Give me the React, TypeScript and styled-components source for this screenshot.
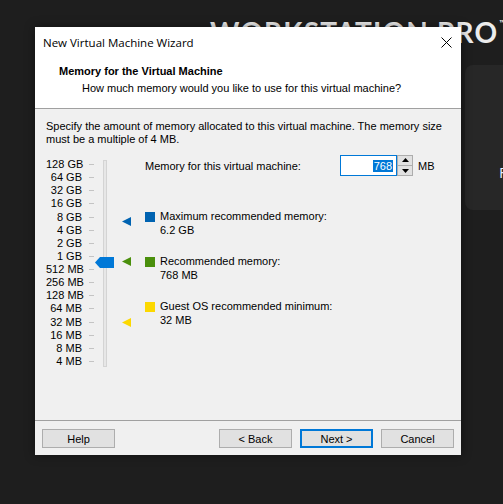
import styled, { createGlobalStyle } from "styled-components";

const GlobalStyle = createGlobalStyle`
  html, body {
    margin: 0;
    padding: 0;
    background: #1e1e1e;
  }
  body {
    font-family: "Liberation Sans", Arial, sans-serif;
    font-size: 11px;
    color: #000;
  }
`;

const ROW_H = 13.125;
const SCALE_TOP = 160;

const scaleLabels = [
    "128 GB", "64 GB", "32 GB", "16 GB", "8 GB", "4 GB", "2 GB", "1 GB",
    "512 MB", "256 MB", "128 MB", "64 MB", "32 MB", "16 MB", "8 MB", "4 MB",
];

// y inside the track for a memory size in MB (log scale, 128 GB at the top)
const trackY = (mb: number) => 158 + ROW_H / 2 + (17 - Math.log2(mb)) * ROW_H - SCALE_TOP;

const markers = [
    { mb: 6348.8, color: "#0063b1" },
    { mb: 768, color: "#4a8f0c" },
    { mb: 32, color: "#fcd800" },
];

const legend = [
    { title: "Maximum recommended memory:", value: "6.2 GB", color: "#0063b1" },
    { title: "Recommended memory:", value: "768 MB", color: "#4a8f0c" },
    { title: "Guest OS recommended minimum:", value: "32 MB", color: "#fcd800" },
];

const Page = styled.div`
    position: relative;
    width: 503px;
    height: 504px;
    overflow: hidden;
    background: #1e1e1e;
`;

const Backdrop = styled.div`
    display: flex;
    flex-direction: column;
    padding: 18px 0 0 210px;
`;

const BrandTitle = styled.div`
    font-family: Lato, "Open Sans", sans-serif;
    font-weight: 700;
    font-size: 28px;
    line-height: 28px;
    letter-spacing: 1.2px;
    color: #ececec;
    white-space: nowrap;

    sup {
        font-size: 8px;
        vertical-align: top;
        line-height: 10px;
        margin-left: 1px;
    }
`;

const HomeCard = styled.div`
    margin: 19px 0 0 255px;
    width: 80px;
    height: 145px;
    padding: 99px 0 0 34px;
    box-sizing: border-box;
    background: #272727;
    border-radius: 8px;
    font-family: "Open Sans", sans-serif;
    font-size: 15px;
    line-height: 16px;
    color: #e6ecff;
    white-space: nowrap;
`;

const Dialog = styled.div`
    position: absolute;
    left: 35px;
    top: 27px;
    width: 426px;
    height: 428px;
    display: flex;
    flex-direction: column;
    background: #f0f0f0;
    box-shadow: 0 0 10px rgba(0, 0, 0, 0.45);
`;

const TitleBar = styled.div`
    height: 30px;
    display: flex;
    align-items: center;
    justify-content: space-between;
    padding-left: 8px;
    background: #fff;
    font-family: "Open Sans", sans-serif;
    font-size: 11.5px;
    white-space: nowrap;
`;

const CloseButton = styled.div`
    width: 30px;
    height: 30px;
    display: flex;
    align-items: center;
    justify-content: center;
`;

const Header = styled.div`
    padding: 6px 0 12px 24px;
    background: #fff;
    border-bottom: 1px solid #a0a0a0;
    line-height: 16px;
    white-space: nowrap;
`;

const HeaderTitle = styled.div`
    font-weight: 700;
`;

const HeaderSub = styled.div`
    margin-top: 1px;
    padding-left: 23px;
`;

const Body = styled.div`
    flex: 1;
    padding: 11px 11px 0;
`;

const Intro = styled.p`
    margin: 0;
    line-height: 13px;
    white-space: nowrap;
`;

const Content = styled.div`
    display: flex;
    align-items: flex-start;
    margin-top: 9px;
`;

const Scale = styled.div`
    display: flex;
    align-items: flex-start;
    padding-top: 3px;
`;

const ScaleLabels = styled.div`
    display: flex;
    flex-direction: column;
`;

const ScaleRow = styled.div`
    display: flex;
    align-items: center;
    height: ${ROW_H}px;
`;

const ScaleLabel = styled.span`
    width: 36px;
    text-align: right;
    white-space: nowrap;
    line-height: ${ROW_H}px;
`;

const Tick = styled.span`
    width: 5px;
    height: 1px;
    margin-left: 7px;
    background: #c4c4c4;
`;

const Track = styled.div`
    position: relative;
    width: 4px;
    height: 207px;
    margin: 2px 0 0 9px;
    box-sizing: border-box;
    background: #e7e7e7;
    border: 1px solid #d4d4d4;
`;

const Thumb = styled.svg`
    position: absolute;
    left: -9px;
    width: 19px;
    height: 11px;
`;

const MarkerLane = styled.div`
    position: relative;
    width: 24px;
    height: 207px;
    margin-top: 2px;
`;

const Marker = styled.svg`
    position: absolute;
    left: 15px;
    width: 9px;
    height: 9px;
`;

const Settings = styled.div`
    display: flex;
    flex-direction: column;
    margin-left: 14px;
`;

const MemoryRow = styled.div`
    display: flex;
    align-items: center;
    height: 21px;
    white-space: nowrap;
`;

const MemoryLabel = styled.span`
    width: 195px;
`;

const NumberBox = styled.div`
    width: 57px;
    height: 21px;
    box-sizing: border-box;
    display: flex;
    align-items: center;
    justify-content: flex-end;
    padding-right: 3px;
    background: #fff;
    border: 1px solid #0078d7;
`;

const Selected = styled.span`
    padding: 0 1px;
    line-height: 12px;
    background: #0078d7;
    color: #fff;
`;

const Spin = styled.div`
    width: 16px;
    height: 21px;
    display: flex;
    flex-direction: column;
`;

const SpinButton = styled.div<{ $down?: boolean }>`
    flex: 1;
    display: flex;
    align-items: center;
    justify-content: center;
    background: #e1e1e1;
    border: 1px solid #adadad;
    margin-top: ${(p) => (p.$down ? "-1px" : "0")};
`;

const Unit = styled.span`
    margin-left: 5px;
`;

const Legend = styled.div`
    display: flex;
    flex-direction: column;
    gap: 17px;
    margin-top: 33px;
`;

const LegendItem = styled.div`
    display: flex;
    align-items: flex-start;
    gap: 5px;
    line-height: 14px;
    white-space: nowrap;
`;

const Swatch = styled.span<{ $color: string }>`
    width: 10px;
    height: 10px;
    margin-top: 3px;
    background: ${(p) => p.$color};
`;

const Footer = styled.div`
    display: flex;
    align-items: center;
    gap: 8px;
    padding: 8px 7px 7px;
    border-top: 1px solid #a0a0a0;
`;

const Button = styled.button<{ $primary?: boolean }>`
    width: 73px;
    height: 19px;
    box-sizing: border-box;
    padding: 0;
    font: inherit;
    color: #000;
    background: #e1e1e1;
    border: ${(p) => (p.$primary ? "2px solid #0078d7" : "1px solid #adadad")};

    &:first-child {
        margin-right: auto;
    }
`;

const App = () => {
    return (
        <Page>
            <GlobalStyle />
            <Backdrop>
                <BrandTitle>
                    WORKSTATION PRO<sup>™</sup>
                </BrandTitle>
                <HomeCard>F</HomeCard>
            </Backdrop>

            <Dialog>
                <TitleBar>
                    <span>New Virtual Machine Wizard</span>
                    <CloseButton>
                        <svg width="11" height="11" viewBox="0 0 11 11">
                            <path d="M0.5 0.5 L10.5 10.5 M10.5 0.5 L0.5 10.5" stroke="#000" strokeWidth="1" />
                        </svg>
                    </CloseButton>
                </TitleBar>
                <Header>
                    <HeaderTitle>Memory for the Virtual Machine</HeaderTitle>
                    <HeaderSub>How much memory would you like to use for this virtual machine?</HeaderSub>
                </Header>
                <Body>
                    <Intro>
                        Specify the amount of memory allocated to this virtual machine. The memory size
                        <br />
                        must be a multiple of 4 MB.
                    </Intro>
                    <Content>
                        <Scale>
                            <ScaleLabels>
                                {scaleLabels.map((label) => (
                                    <ScaleRow key={label}>
                                        <ScaleLabel>{label}</ScaleLabel>
                                        <Tick />
                                    </ScaleRow>
                                ))}
                            </ScaleLabels>
                            <Track>
                                <Thumb viewBox="0 0 19 11" style={{ top: trackY(768) - 5.5 }}>
                                    <polygon points="0,5.5 5,0 19,0 19,11 5,11" fill="#0078d7" />
                                </Thumb>
                            </Track>
                            <MarkerLane>
                                {markers.map((m) => (
                                    <Marker key={m.mb} viewBox="0 0 9 9" style={{ top: trackY(m.mb) - 4.5 }}>
                                        <polygon points="0,4.5 9,0 9,9" fill={m.color} />
                                    </Marker>
                                ))}
                            </MarkerLane>
                        </Scale>
                        <Settings>
                            <MemoryRow>
                                <MemoryLabel>Memory for this virtual machine:</MemoryLabel>
                                <NumberBox>
                                    <Selected>768</Selected>
                                </NumberBox>
                                <Spin>
                                    <SpinButton>
                                        <svg width="7" height="5" viewBox="0 0 7 5">
                                            <polygon points="3.5,0 7,4 0,4" fill="#000" />
                                        </svg>
                                    </SpinButton>
                                    <SpinButton $down>
                                        <svg width="7" height="5" viewBox="0 0 7 5">
                                            <polygon points="0,1 7,1 3.5,5" fill="#000" />
                                        </svg>
                                    </SpinButton>
                                </Spin>
                                <Unit>MB</Unit>
                            </MemoryRow>
                            <Legend>
                                {legend.map((item) => (
                                    <LegendItem key={item.title}>
                                        <Swatch $color={item.color} />
                                        <div>
                                            <div>{item.title}</div>
                                            <div>{item.value}</div>
                                        </div>
                                    </LegendItem>
                                ))}
                            </Legend>
                        </Settings>
                    </Content>
                </Body>
                <Footer>
                    <Button>Help</Button>
                    <Button>&lt; Back</Button>
                    <Button $primary>Next &gt;</Button>
                    <Button>Cancel</Button>
                </Footer>
            </Dialog>
        </Page>
    );
};

export default App;
